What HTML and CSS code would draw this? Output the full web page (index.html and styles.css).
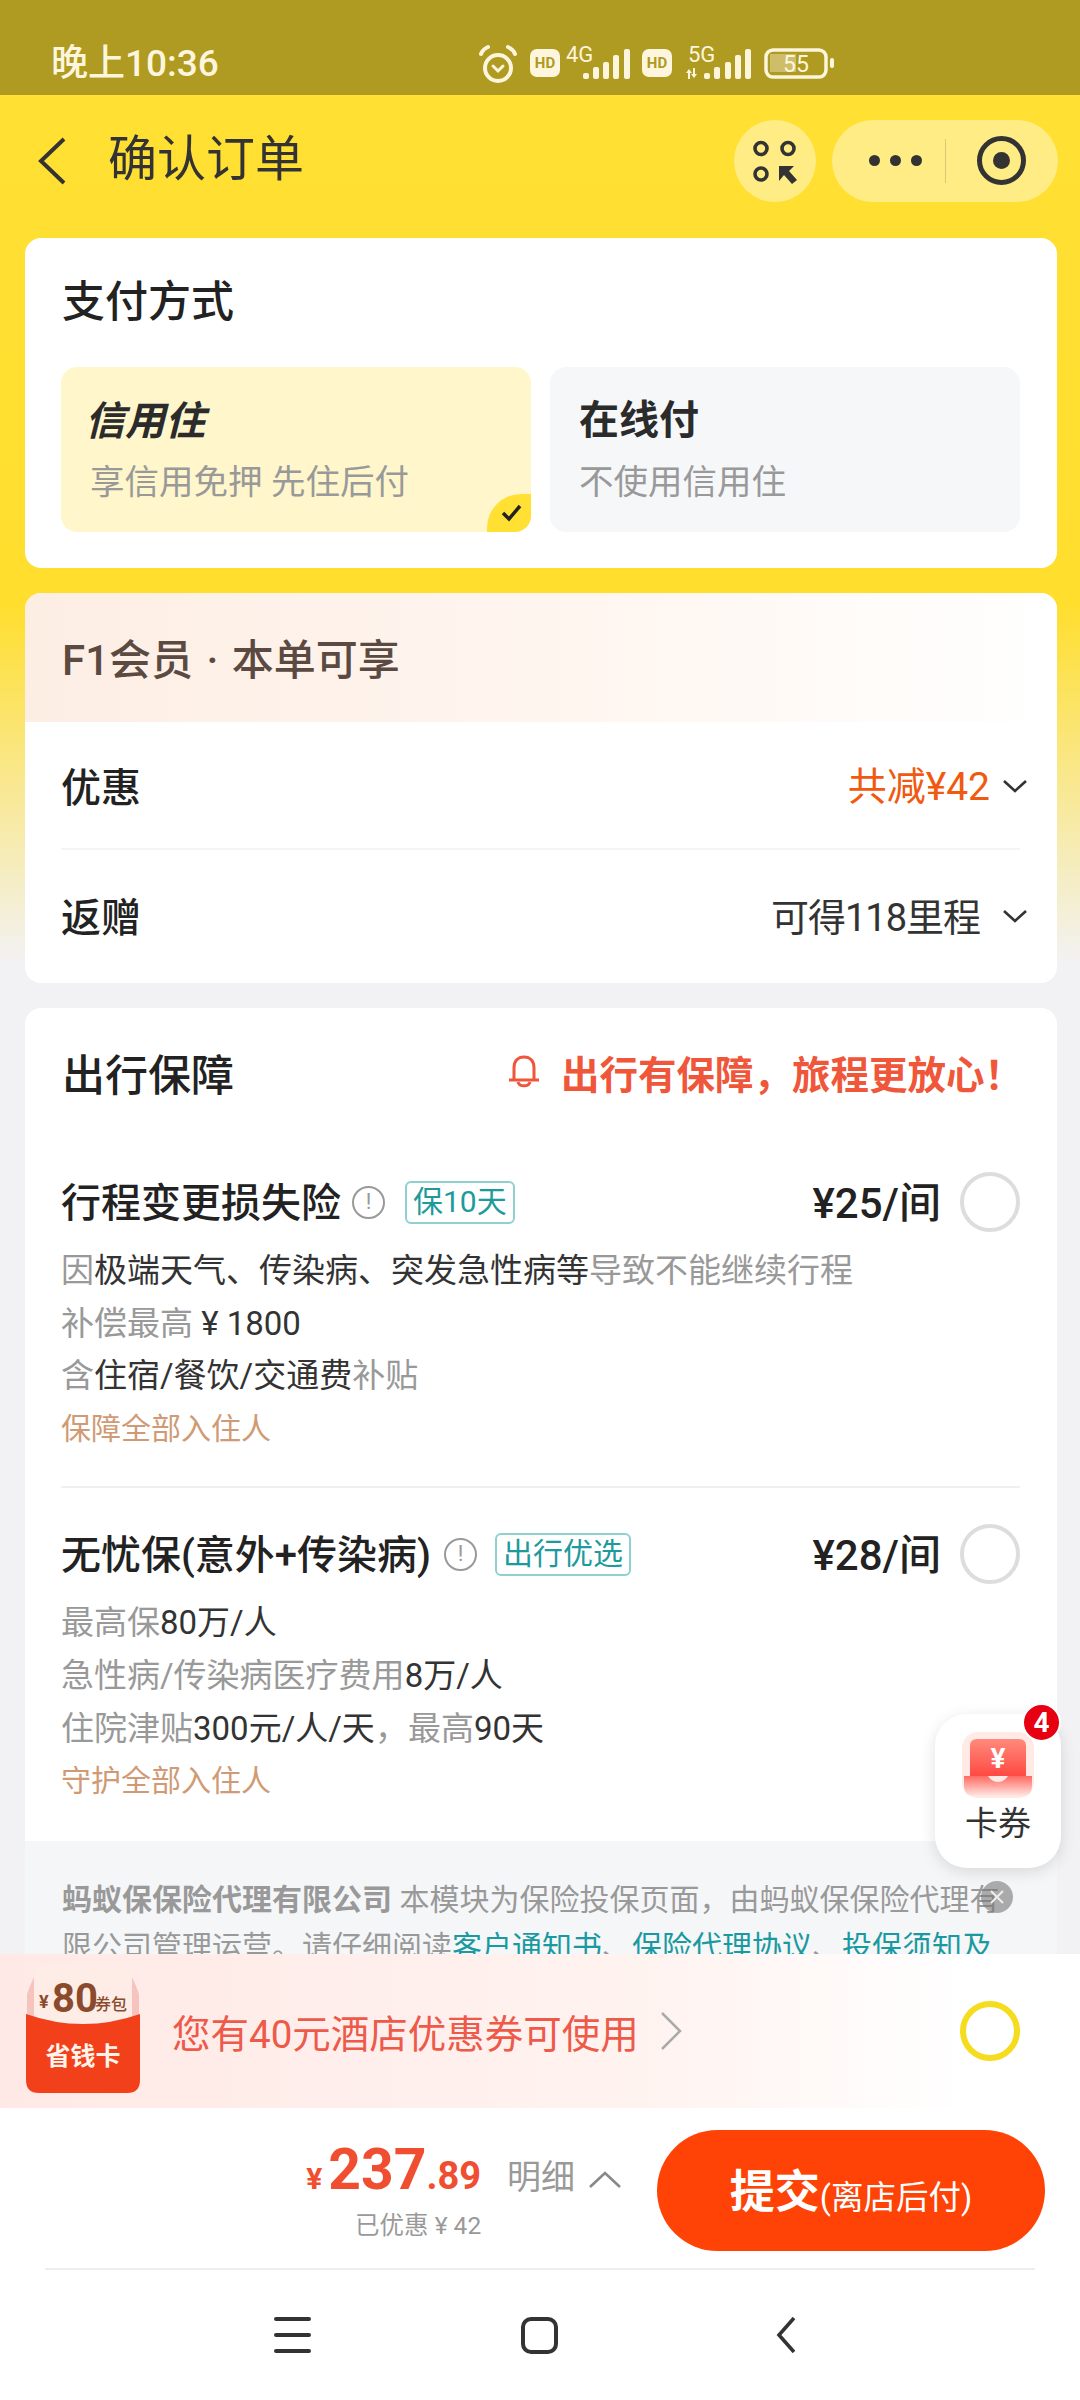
FILE: index.html
```html
<!DOCTYPE html>
<html>
<head>
<meta charset="utf-8">
<title>确认订单</title>
<link rel="stylesheet" href="styles.css">
</head>
<body>
<div class="phone">
    <!-- 状态栏 -->
    <div class="status">
        <span class="status-time">晚上10:36</span>
        <svg class="status-icons" width="360" height="44" viewBox="0 0 360 44">
            <g fill="none" stroke="#FDF6DC" stroke-width="4" stroke-linecap="round">
                <circle cx="20" cy="26" r="13"/>
                <path d="M3 12 Q5 7 10 5M37 12 Q35 7 30 5"/>
                <path d="M15 24 L20 29 L25 24" stroke-width="3"/>
            </g>
            <g fill="#FDF6DC">
                <rect x="52" y="7" width="30" height="28" rx="7"/>
                <rect x="164" y="7" width="30" height="28" rx="7"/>
                <rect x="105" y="31" width="6" height="6" rx="2"/>
                <rect x="115" y="25" width="6" height="12" rx="2"/>
                <rect x="125" y="20" width="6" height="17" rx="2"/>
                <rect x="135" y="13" width="6" height="24" rx="2"/>
                <rect x="146" y="7" width="6" height="30" rx="2"/>
                <path d="M208 31l3-4 3 4h-2v6h-2v-6zM215 26h2v6h2l-3 4-3-4h2z"/>
                <rect x="226" y="31" width="6" height="6" rx="2"/>
                <rect x="236" y="25" width="6" height="12" rx="2"/>
                <rect x="247" y="20" width="6" height="17" rx="2"/>
                <rect x="257" y="13" width="6" height="24" rx="2"/>
                <rect x="267" y="7" width="6" height="30" rx="2"/>
                <rect x="352" y="16" width="4" height="10" rx="2"/>
                <rect x="292" y="12" width="26" height="18" fill="#FDF6DC" opacity="0.4"/>
            </g>
            <rect x="288" y="8" width="60" height="27" rx="7" fill="none" stroke="#FDF6DC" stroke-width="3.5"/>
            <g fill="#FDF6DC">
                <text x="88" y="20" font-size="22">4G</text>
                <text x="210" y="20" font-size="22">5G</text>
                <text x="318" y="30" font-size="23" text-anchor="middle">55</text>
                <text x="67" y="26" font-size="15" font-weight="700" text-anchor="middle" fill="#AF9A22">HD</text>
                <text x="179" y="26" font-size="15" font-weight="700" text-anchor="middle" fill="#AF9A22">HD</text>
            </g>
        </svg>
    </div>

    <div class="main">
        <!-- 标题栏 -->
        <div class="nav">
            <svg class="nav-back" width="30" height="48" viewBox="0 0 30 48">
                <path d="M27 2 L4 24 L27 46" fill="none" stroke="#333" stroke-width="4"/>
            </svg>
            <div class="nav-title">确认订单</div>
            <div class="nav-scan">
                <svg width="46" height="46" viewBox="0 0 46 46">
                    <g fill="none" stroke="#333" stroke-width="3.6">
                        <circle cx="9" cy="10.5" r="6"/>
                        <circle cx="36" cy="10.5" r="6"/>
                        <circle cx="9" cy="36" r="6"/>
                    </g>
                    <polygon points="27,28 42,28 37,33 45,42 40,46 32,37 27,43" fill="#333"/>
                </svg>
            </div>
            <div class="nav-capsule">
                <div class="nav-dots"><i></i><i></i><i></i></div>
                <div class="nav-line"></div>
                <div class="nav-target"><i></i></div>
            </div>
        </div>

        <!-- 支付方式 -->
        <div class="card">
            <div class="card-title pay-title">支付方式</div>
            <div class="pay-list">
                <div class="pay-item pay-on">
                    <div class="pay-name pay-italic">信用住</div>
                    <div class="pay-desc">享信用免押 先住后付</div>
                    <div class="pay-check">
                        <svg width="24" height="20" viewBox="0 0 24 20">
                            <path d="M3 10 L9 16 L20 3" fill="none" stroke="#222" stroke-width="3.5"/>
                        </svg>
                    </div>
                </div>
                <div class="pay-item">
                    <div class="pay-name">在线付</div>
                    <div class="pay-desc">不使用信用住</div>
                </div>
            </div>
        </div>

        <!-- 会员 -->
        <div class="card vip">
            <div class="vip-head">F1会员 · 本单可享</div>
            <div class="vip-row vip-line">
                <span class="vip-label">优惠</span>
                <span class="vip-value vip-red">共减¥42</span>
                <svg class="vip-arrow" width="26" height="14" viewBox="0 0 26 14"><path d="M2 2 L13 12 L24 2" fill="none" stroke="#333" stroke-width="2.6"/></svg>
            </div>
            <div class="vip-row vip-row2">
                <span class="vip-label">返赠</span>
                <span class="vip-value vip-far">可得118里程</span>
                <svg class="vip-arrow" width="26" height="14" viewBox="0 0 26 14"><path d="M2 2 L13 12 L24 2" fill="none" stroke="#333" stroke-width="2.6"/></svg>
            </div>
        </div>

        <!-- 出行保障 -->
        <div class="card safe">
            <div class="safe-head">
                <div class="card-title">出行保障</div>
                <div class="safe-tip">
                    <svg width="34" height="36" viewBox="0 0 34 36" fill="none" stroke="#F0563A" stroke-width="3">
                        <path d="M7 25 V14 C7 7 11 3 17 3 C23 3 27 7 27 14 V25"/>
                        <path d="M2 26 H32"/>
                        <path d="M11 28 C12 33 22 33 23 28"/>
                    </svg>
                    <span>出行有保障，旅程更放心！</span>
                </div>
            </div>

            <div class="safe-item">
                <div class="safe-top">
                    <span class="safe-name">行程变更损失险</span>
                    <span class="safe-info">!</span>
                    <span class="safe-tag">保10天</span>
                    <span class="safe-price">¥25/间</span>
                    <span class="radio"></span>
                </div>
                <div class="safe-lines">
                    <p>因<b>极端天气、传染病、突发急性病等</b>导致不能继续行程</p>
                    <p>补偿最高 <b>¥ 1800</b></p>
                    <p>含<b>住宿/餐饮/交通费</b>补贴</p>
                    <p class="safe-who">保障全部入住人</p>
                </div>
            </div>
            <div class="safe-split"></div>
            <div class="safe-item safe-item2">
                <div class="safe-top">
                    <span class="safe-name">无忧保(意外+传染病)</span>
                    <span class="safe-info">!</span>
                    <span class="safe-tag">出行优选</span>
                    <span class="safe-price">¥28/间</span>
                    <span class="radio"></span>
                </div>
                <div class="safe-lines">
                    <p>最高保<b>80万/人</b></p>
                    <p>急性病/传染病医疗费用<b>8万/人</b></p>
                    <p>住院津贴<b>300元/人/天</b>，最高<b>90天</b></p>
                    <p class="safe-who">守护全部入住人</p>
                </div>
            </div>

            <div class="safe-note">
                <b>蚂蚁保保险代理有限公司</b> 本模块为保险投保页面，由蚂蚁保保险代理有限公司管理运营。请仔细阅读<a>客户通知书</a>、<a>保险代理协议</a>、<a>投保须知及</a>
            </div>
        </div>
    </div>

    <!-- 省钱卡 -->
    <div class="coupon">
        <svg class="coupon-pic" width="116" height="130" viewBox="0 0 116 130">
            <path d="M2 30 Q8 14 10 12 L106 12 Q108 14 114 30 V60 H2 Z" fill="#F6C4BC"/>
            <path d="M9 60 V14 Q9 2 21 2 H95 Q107 2 107 14 V60 Z" fill="#FDEDE6"/>
            <path d="M1 50 Q58 70 115 50 V116 Q115 129 102 129 H14 Q1 129 1 116 Z" fill="#F2401A"/>
            <text x="14" y="44" font-size="18" font-weight="700" fill="#8B4A2B">¥</text>
            <text x="27" y="48" font-size="40" font-weight="700" fill="#8B4A2B">80</text>
            <text x="70" y="46" font-size="16" font-weight="500" fill="#8B4A2B">券包</text>
            <text x="58" y="101" font-size="25" font-weight="700" fill="#FFF3EA" text-anchor="middle">省钱卡</text>
        </svg>
        <div class="coupon-text">您有40元酒店优惠券可使用</div>
        <svg class="coupon-arrow" width="24" height="40" viewBox="0 0 24 40"><path d="M3 2 L21 20 L3 38" fill="none" stroke="#AAA" stroke-width="2.5"/></svg>
        <span class="radio radio-on"></span>
    </div>

    <!-- 底部提交 -->
    <div class="footer">
        <div class="total">
            <div class="total-top">
                <span class="total-yen">¥</span><span class="total-big">237</span><span class="total-small">.89</span>
                <span class="total-more">明细</span>
                <svg width="34" height="18" viewBox="0 0 34 18"><path d="M2 16 L17 2 L32 16" fill="none" stroke="#888" stroke-width="2.6"/></svg>
            </div>
            <div class="total-cut">已优惠 ¥ 42</div>
        </div>
        <div class="submit"><b>提交</b><span>(离店后付)</span></div>
    </div>

    <!-- 系统导航 -->
    <div class="sysbar">
        <div class="sys-menu"><i></i><i></i><i></i></div>
        <div class="sys-home"></div>
        <svg width="20" height="36" viewBox="0 0 20 36"><path d="M18 1 L3 18 L18 35" fill="none" stroke="#333" stroke-width="3.6"/></svg>
    </div>

    <!-- 浮动卡券 -->
    <div class="float">
        <span class="float-num">4</span>
        <svg width="72" height="66" viewBox="0 0 72 66">
            <defs>
                <linearGradient id="fade" x1="0" y1="0" x2="0" y2="1">
                    <stop offset="0" stop-color="#FF8A7C"/>
                    <stop offset="1" stop-color="#FF4A42"/>
                </linearGradient>
                <linearGradient id="fade2" x1="0" y1="0" x2="0" y2="1">
                    <stop offset="0" stop-color="#FF6A60"/>
                    <stop offset="1" stop-color="#FFE6E2"/>
                </linearGradient>
            </defs>
            <rect x="0" y="0" width="72" height="66" rx="16" fill="#FFEAE6"/>
            <path d="M8 44 V14 Q8 7 15 7 H57 Q64 7 64 14 V44 Z" fill="url(#fade)"/>
            <path d="M2 44 H26 Q30 50 36 50 Q42 50 46 44 H70 V54 Q70 64 60 64 H12 Q2 64 2 54 Z" fill="url(#fade2)"/>
            <text x="36" y="36" font-size="28" font-weight="700" fill="#FFF" text-anchor="middle">¥</text>
        </svg>
        <span class="float-text">卡券</span>
    </div>
    <div class="float-close">
        <svg width="18" height="18" viewBox="0 0 18 18"><path d="M3 3 L15 15 M15 3 L3 15" stroke="#EEE" stroke-width="2"/></svg>
    </div>
</div>
</body>
</html>
```
FILE: styles.css
```css
*{
    margin: 0;
    padding: 0;
    box-sizing: border-box;
}
body{
    background-color: #fff;
    font-family: Roboto, "Noto Sans CJK SC", sans-serif;
    color: #222;
}
svg text{
    font-family: Roboto, "Noto Sans CJK SC", sans-serif;
}
.phone{
    width: 1080px;
    height: 2400px;
    position: relative;
    overflow: hidden;
    display: flex;
    flex-direction: column;
}

/* 状态栏 */
.status{
    height: 95px;
    flex: none;
    background-color: #AF9A22;
    display: flex;
    align-items: flex-start;
    padding: 42px 0 0 51px;
}
.status-time{
    width: 427px;
    font-size: 37px;
    line-height: 44px;
    font-weight: 500;
    color: #FDF6DC;
}
.status-icons{
    flex: none;
}

/* 主体 */
.main{
    flex: 1;
    min-height: 0;
    overflow: hidden;
    background: linear-gradient(#FFE033 0, #FFDE2E 510px, #F2F2F4 870px);
}
.nav{
    height: 143px;
    display: flex;
    align-items: center;
    padding: 0 22px 12px 37px;
}
.nav-back{
    flex: none;
}
.nav-title{
    margin-left: 41px;
    padding-bottom: 12px;
    font-size: 49px;
    color: #333;
    flex: 1;
}
.nav-scan{
    width: 82px;
    height: 82px;
    border-radius: 50%;
    background-color: #FFEC85;
    display: flex;
    align-items: center;
    justify-content: center;
}
.nav-capsule{
    width: 226px;
    height: 82px;
    margin-left: 16px;
    border-radius: 41px;
    background-color: #FFEC85;
    display: flex;
    align-items: center;
    padding-left: 37px;
}
.nav-dots{
    display: flex;
    gap: 10px;
}
.nav-dots i{
    width: 11px;
    height: 11px;
    border-radius: 50%;
    background-color: #333;
}
.nav-line{
    width: 1px;
    height: 44px;
    margin-left: 23px;
    background-color: #D8C878;
}
.nav-target{
    width: 49px;
    height: 49px;
    margin-left: 31px;
    border: 5px solid #333;
    border-radius: 50%;
    display: flex;
    align-items: center;
    justify-content: center;
}
.nav-target i{
    width: 17px;
    height: 17px;
    border-radius: 50%;
    background-color: #333;
}

/* 卡片 */
.card{
    width: 1032px;
    margin: 0 0 25px 25px;
    background-color: #fff;
    border-radius: 16px;
    overflow: hidden;
}
.card-title{
    font-size: 43px;
    font-weight: 500;
    color: #222;
}

/* 支付方式 */
.pay-title{
    height: 129px;
    line-height: 128px;
    padding-left: 37px;
}
.pay-list{
    display: flex;
    gap: 19px;
    padding: 0 37px 36px 36px;
}
.pay-item{
    flex: 1;
    height: 165px;
    background-color: #F6F7F9;
    border-radius: 16px;
    padding: 27px 0 0 29px;
    position: relative;
    overflow: hidden;
}
.pay-on{
    background-color: #FFF6CC;
}
.pay-name{
    font-size: 40px;
    line-height: 54px;
    font-weight: 700;
    color: #2b2b2b;
}
.pay-italic{
    font-style: italic;
    margin: 1px 0 -1px -5px;
}
.pay-desc{
    margin-top: 9px;
    font-size: 34.5px;
    line-height: 50px;
    color: #999;
}
.pay-check{
    position: absolute;
    right: 0;
    bottom: 0;
    width: 44px;
    height: 38px;
    background-color: #FFE033;
    border-top-left-radius: 34px;
    display: flex;
    align-items: center;
    justify-content: center;
    padding-left: 6px;
}

/* 会员 */
.vip-head{
    height: 129px;
    line-height: 136px;
    padding-left: 37px;
    font-size: 42px;
    font-weight: 500;
    word-spacing: 3px;
    color: #5A4A42;
    background: linear-gradient(90deg, #FDEEE4, #FFF6F0 55%, #fff);
}
.vip-row{
    margin: 0 37px 0 36px;
    height: 128px;
    display: flex;
    align-items: center;
}
.vip-line{
    border-bottom: 2px solid #F5F5F5;
}
.vip-row2{
    height: 133px;
    padding-bottom: 4px;
}
.vip-label{
    font-size: 40px;
    font-weight: 500;
    flex: 1;
}
.vip-value{
    font-size: 38px;
    color: #333;
}
.vip-red{
    font-size: 39px;
    color: #F0590F;
    padding-bottom: 5px;
}
.vip-far{
    letter-spacing: -1px;
}
.vip-arrow{
    margin: 2px -8px 0 12px;
}
.vip-row2 .vip-arrow{
    margin-left: 22px;
}

/* 出行保障 */
.safe{
    margin-bottom: 0;
}
.safe-head{
    height: 132px;
    display: flex;
    align-items: center;
    justify-content: space-between;
    padding: 0 34px 4px 37px;
}
.safe-tip{
    display: flex;
    align-items: center;
    gap: 20px;
    font-size: 38.5px;
    font-weight: 700;
    color: #F0563A;
}
.safe-item{
    padding: 32px 37px 31px 36px;
}
.safe-item2{
    padding-top: 36px;
    padding-bottom: 33px;
}
.safe-top{
    height: 60px;
    display: flex;
    align-items: center;
}
.safe-name{
    font-size: 40px;
    font-weight: 500;
    color: #222;
    margin-bottom: 5px;
}
.safe-info{
    width: 33px;
    height: 33px;
    margin-left: 11px;
    border: 2.5px solid #999;
    border-radius: 50%;
    font-size: 22px;
    line-height: 27px;
    text-align: center;
    color: #999;
}
.safe-item2 .safe-info{
    margin-left: 13px;
}
.safe-tag{
    height: 43px;
    margin-left: 20px;
    padding: 0 6px;
    border: 2px solid #8FD0D1;
    border-radius: 6px;
    font-size: 30px;
    line-height: 38px;
    color: #1E9A9C;
}
.safe-item2 .safe-tag{
    margin-left: 18px;
}
.safe-price{
    margin-left: auto;
    margin-bottom: 5px;
    font-size: 42px;
    font-weight: 500;
    color: #222;
}
.radio{
    flex: none;
    width: 60px;
    height: 60px;
    margin-left: 19px;
    border: 4px solid #DDD;
    border-radius: 50%;
}
.safe-lines{
    margin-top: 13px;
    font-size: 33px;
    line-height: 52.6px;
    color: #999;
}
.safe-lines b{
    font-weight: 400;
    color: #333;
}
.safe-who{
    font-size: 30px;
    color: #D09A75;
}
.safe-split{
    height: 2px;
    margin: 0 37px 0 36px;
    background-color: #F0F0F0;
}
.safe-note{
    padding: 35px 37px 30px 37px;
    background-color: #F5F6F8;
    font-size: 30px;
    line-height: 47px;
    color: #999;
}
.safe-note b{
    font-weight: 700;
}
.safe-note a{
    color: #1A9AA0;
}

/* 省钱卡 */
.coupon{
    height: 154px;
    flex: none;
    display: flex;
    align-items: center;
    padding: 0 60px 0 25px;
    background: linear-gradient(90deg, #FFE9E6, #FFF3F0 60%, #fff 90%);
}
.coupon-pic{
    flex: none;
    margin-top: -4px;
}
.coupon-text{
    margin-left: 31px;
    font-size: 38.5px;
    color: #EE5A4A;
}
.coupon-arrow{
    margin-left: 20px;
}
.radio-on{
    margin-left: auto;
    border: 6px solid #F5DC1E;
    background-color: #fff;
}

/* 底部提交 */
.footer{
    height: 162px;
    flex: none;
    margin: 0 45px;
    border-bottom: 2px solid #EEE;
    display: flex;
    align-items: flex-start;
    justify-content: flex-end;
    padding-top: 22px;
    gap: 35px;
}
.total{
    padding-top: 6px;
}
.total-top{
    display: flex;
    align-items: baseline;
    height: 66px;
}
.total-yen{
    font-size: 30px;
    font-weight: 700;
    color: #F04E30;
    margin-right: 6px;
}
.total-big{
    font-size: 57px;
    font-weight: 700;
    color: #F04E30;
}
.total-small{
    font-size: 38px;
    font-weight: 700;
    color: #F04E30;
}
.total-more{
    margin: 0 13px 0 26px;
    font-size: 34px;
    color: #999;
}
.total-cut{
    margin-top: 6px;
    width: 175px;
    text-align: right;
    font-size: 24.5px;
    line-height: 36px;
    color: #999;
}
.submit{
    width: 388px;
    height: 121px;
    flex: none;
    margin-right: -10px;
    border-radius: 61px;
    background-color: #FF4205;
    color: #fff;
    display: flex;
    align-items: center;
    justify-content: center;
}
.submit b{
    font-size: 45px;
    font-weight: 700;
    padding-bottom: 4px;
}
.submit span{
    font-size: 32.5px;
    padding-top: 8px;
}

/* 系统导航 */
.sysbar{
    height: 130px;
    flex: none;
    display: flex;
    align-items: center;
    padding: 0 0 0 274px;
}
.sys-menu{
    width: 37px;
    height: 36px;
    display: flex;
    flex-direction: column;
    justify-content: space-between;
}
.sys-menu i{
    height: 4px;
    border-radius: 2px;
    background-color: #333;
}
.sys-home{
    width: 37px;
    height: 37px;
    margin: 0 218px 0 210px;
    border: 4px solid #333;
    border-radius: 10px;
}

/* 浮动卡券 */
.float{
    position: absolute;
    left: 935px;
    top: 1714px;
    width: 126px;
    height: 154px;
    padding-top: 18px;
    border-radius: 32px;
    background-color: #fff;
    box-shadow: 0 4px 16px rgba(0,0,0,0.12);
    display: flex;
    flex-direction: column;
    align-items: center;
}
.float-num{
    position: absolute;
    right: 0;
    top: -11px;
    width: 39px;
    height: 39px;
    border: 2px solid #fff;
    border-radius: 50%;
    background-color: #E60012;
    color: #fff;
    font-size: 28px;
    font-weight: 700;
    line-height: 35px;
    text-align: center;
}
.float-text{
    margin-top: 3px;
    font-size: 33px;
    line-height: 46px;
    color: #333;
}
.float-close{
    position: absolute;
    left: 981px;
    top: 1881px;
    width: 32px;
    height: 32px;
    border-radius: 50%;
    background-color: rgba(120,120,120,0.6);
    display: flex;
    align-items: center;
    justify-content: center;
}
```
